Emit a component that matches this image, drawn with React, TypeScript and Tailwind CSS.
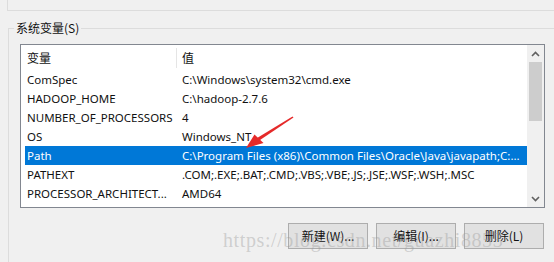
import React from "react";

const rows: [string, string][] = [
  ["ComSpec", "C:\\Windows\\system32\\cmd.exe"],
  ["HADOOP_HOME", "C:\\hadoop-2.7.6"],
  ["NUMBER_OF_PROCESSORS", "4"],
  ["OS", "Windows_NT"],
  ["Path", "C:\\Program Files (x86)\\Common Files\\Oracle\\Java\\javapath;C:..."],
  ["PATHEXT", ".COM;.EXE;.BAT;.CMD;.VBS;.VBE;.JS;.JSE;.WSF;.WSH;.MSC"],
  ["PROCESSOR_ARCHITECT...", "AMD64"],
];

function Chevron({ up }: { up?: boolean }) {
  return (
    <svg width="9" height="6" viewBox="0 0 9 6">
      <path
        d={up ? "M1 5 L4.5 1.5 L8 5" : "M1 1 L4.5 4.5 L8 1"}
        fill="none"
        stroke="#606060"
        strokeWidth="1.6"
      />
    </svg>
  );
}

export default function App() {
  return (
    <div className="relative w-[554px] h-[262px] overflow-hidden bg-[#f0f0f0] text-[12px] leading-[16px] text-[#111] font-['Noto_Sans','Noto_Sans_CJK_SC',sans-serif]">
      <div className="ml-[7px] h-[11px] border-l border-b border-[#dcdcdc]" />
      <div className="relative ml-[8px] mt-[17px] h-[300px] border-l border-t border-[#dcdcdc]">
        <span className="absolute left-[5px] top-[-9px] bg-[#f0f0f0] px-[2px] font-['Noto_Sans_CJK_SC','Noto_Sans',sans-serif]">
          系统变量(S)
        </span>
        <div className="ml-[11px] mt-[15px] flex h-[164px] w-[525px] border border-[#828790] bg-white">
          <div className="flex-1 overflow-hidden">
            <div className="flex h-[25px] items-center pl-[4px]">
              <div className="w-[151px] pl-[2px] font-['Noto_Sans_CJK_SC',sans-serif]">变量</div>
              <div className="h-[20px] w-px bg-[#e5e5e5]" />
              <div className="pl-[5px] font-['Noto_Sans_CJK_SC',sans-serif]">值</div>
            </div>
            {rows.map(([k, v]) => {
              const sel = k === "Path";
              return (
                <div key={k} className="pl-[4px]">
                  <div
                    className={
                      "flex h-[19px] items-center whitespace-nowrap text-[11.5px] " +
                      (sel ? "bg-[#0078d7] text-white" : "")
                    }
                  >
                    <div className="w-[153px] shrink-0 overflow-hidden pl-[2px]">{k}</div>
                    <div className="pl-[4px]">{v}</div>
                  </div>
                </div>
              );
            })}
          </div>
          <div className="flex w-[17px] flex-col bg-[#f0f0f0]">
            <div className="flex h-[17px] items-center justify-center">
              <Chevron up />
            </div>
            <div className="mx-[2px] h-[59px] bg-[#cdcdcd]" />
            <div className="flex-1" />
            <div className="flex h-[17px] items-center justify-center">
              <Chevron />
            </div>
          </div>
        </div>
        <div className="ml-[11px] mt-[15px] flex w-[525px] justify-end gap-[8px] pr-[1px]">
          {["新建(W)...", "编辑(I)...", "删除(L)"].map((t) => (
            <button
              key={t}
              className="flex h-[26px] w-[80px] items-center justify-center border border-[#adadad] bg-[#e1e1e1] font-['Noto_Sans_CJK_SC','Noto_Sans',sans-serif]"
            >
              {t}
            </button>
          ))}
        </div>
      </div>
      <div className="pointer-events-none absolute left-[223px] top-[228px] whitespace-nowrap text-[20px] leading-[24px] tracking-[0.6px] text-[#9a9a9a]/40 font-['Liberation_Serif',serif]">
        https://blog.csdn.net/guazhi8853
      </div>
      <svg className="pointer-events-none absolute left-0 top-0" width="554" height="262">
        <polygon
          points="293.5,117.6 292.5,116.4 257.5,137.8 259.3,140.6"
          fill="#e52a2a"
        />
        <polygon points="246,148 254.5,134.5 263.5,143" fill="#e52a2a" />
      </svg>
    </div>
  );
}
